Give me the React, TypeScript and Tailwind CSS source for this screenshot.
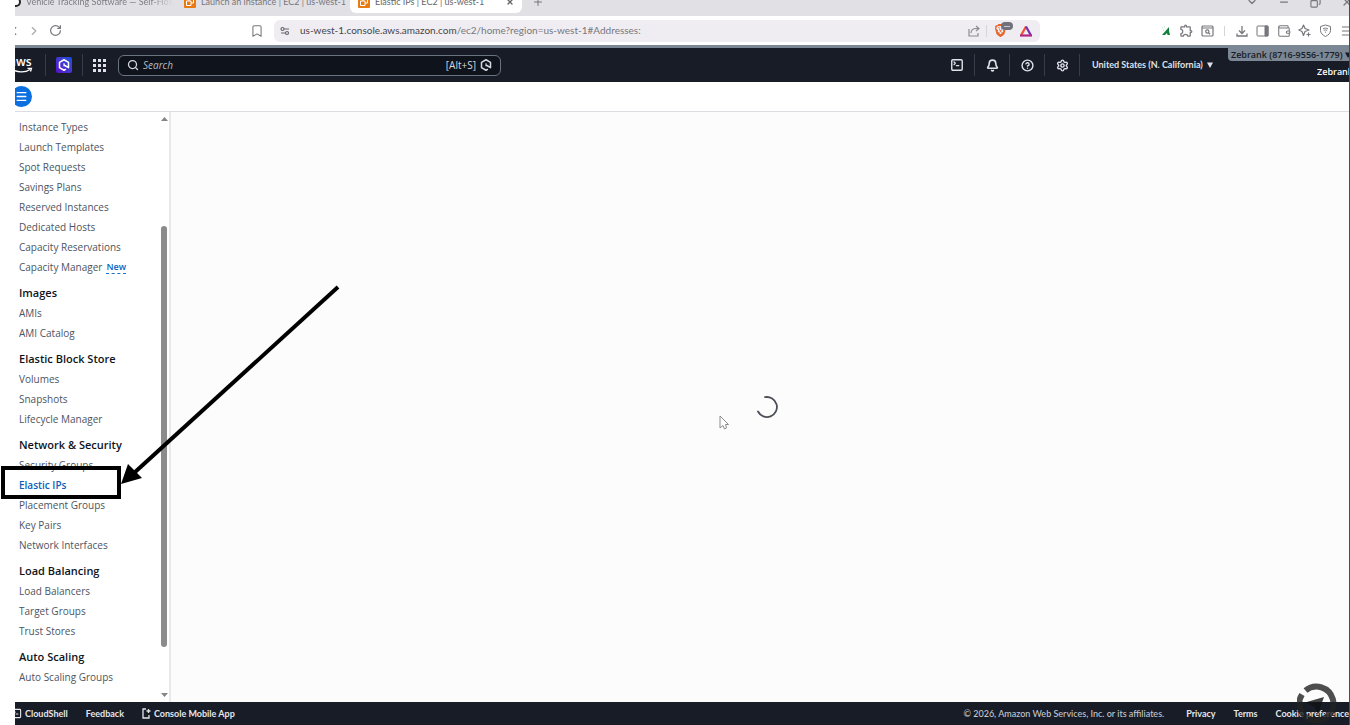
import React from 'react';
import {
  Bell,
  Bookmark,
  ChevronDown,
  ChevronLeft,
  ChevronRight,
  CircleHelp,
  Copy,
  Menu,
  Minus,
  Plus,
  RotateCw,
  Search,
  Settings,
  SquareTerminal,
  Wallet,
  X,
} from 'lucide-react';
import { MdOutlineExtension } from 'react-icons/md';
import { SiBrave } from 'react-icons/si';

const sections = [
  {
    title: '',
    items: [
      'Instance Types',
      'Launch Templates',
      'Spot Requests',
      'Savings Plans',
      'Reserved Instances',
      'Dedicated Hosts',
      'Capacity Reservations',
      'Capacity Manager',
    ],
  },
  { title: 'Images', items: ['AMIs', 'AMI Catalog'] },
  { title: 'Elastic Block Store', items: ['Volumes', 'Snapshots', 'Lifecycle Manager'] },
  {
    title: 'Network & Security',
    items: ['Security Groups', 'Elastic IPs', 'Placement Groups', 'Key Pairs', 'Network Interfaces'],
  },
  { title: 'Load Balancing', items: ['Load Balancers', 'Target Groups', 'Trust Stores'] },
  { title: 'Auto Scaling', items: ['Auto Scaling Groups'] },
];

const HexIcon = () => (
  <svg width="12" height="12" viewBox="0 0 16 16" fill="none" stroke="currentColor" strokeWidth="2">
    <path d="M10.500 13.500 8 15 2 11.500v-7L8 1l6 3.500v7L8 8" strokeLinejoin="round" />
    <path d="M8 5.500v4" strokeWidth="1.500" />
  </svg>
);

const Caret = () => (
  <svg className="shrink-0" width="6" height="6" viewBox="0 0 6 6">
    <path d="M0 .5h6L3 6z" fill="currentColor" />
  </svg>
);

const Ec2Icon = () => (
  <svg className="shrink-0" width="12" height="12" viewBox="0 0 12 12">
    <rect width="12" height="12" rx="1" fill="#e87a12" />
    <path d="M2.500 5h4.500v4.500H2.500zM5 5V2.500h4.500V7H7" fill="none" stroke="#fff" />
  </svg>
);

const BrowserTabs = () => (
  <div className="flex h-4 flex-col justify-end overflow-hidden bg-[#e1e0e5] pb-[3px] font-['Lato',sans-serif] text-[9px] text-[#77777d]">
    <div className="flex h-[22px] shrink-0 items-center">
      <div className="flex w-[161px] items-center gap-[5px] overflow-hidden whitespace-nowrap">
        <svg className="-ml-1 shrink-0" width="10" height="10" viewBox="0 0 10 10">
          <circle cx="5" cy="5" r="4" fill="#fff" stroke="#26262b" strokeWidth="2" />
        </svg>
        <span className="bg-linear-to-r from-[#77777d] from-85% to-transparent bg-clip-text text-transparent">
          Vehicle Tracking Software — Self-Hos
        </span>
      </div>
      <div className="flex w-[174px] items-center gap-[5px] whitespace-nowrap pl-2">
        <Ec2Icon />
        <span>Launch an instance | EC2 | us-west-1</span>
      </div>
      <div className="flex h-full w-[172px] items-center gap-[5px] whitespace-nowrap rounded-b-md bg-white px-2 text-[#66666b]">
        <Ec2Icon />
        <span className="flex-1">Elastic IPs | EC2 | us-west-1</span>
        <button aria-label="Close tab"><X size={8} strokeWidth={4} /></button>
      </div>
      <button className="ml-2.5" aria-label="New tab"><Plus size={12} /></button>
      <div className="-mr-1 ml-auto flex items-center gap-5">
        <ChevronDown size={12} strokeWidth={2.5} />
        <Minus size={12} strokeWidth={2.5} />
        <Copy size={11} strokeWidth={2.5} className="-scale-x-100" />
        <X size={12} strokeWidth={2.5} />
      </div>
    </div>
  </div>
);

const toolIcons = [
  <svg key="leaf" width="10" height="10" viewBox="0 0 10 10">
    <path d="M1 9 8 1v4l1 4H6.500L6 7 4 9z" fill="#12803c" />
    <path d="M1 2h1M3 1h1M2 4h1" stroke="#b5dcb9" />
  </svg>,
  <MdOutlineExtension key="extension" size={15} />,
  <svg key="tab-search" width="13" height="12" viewBox="0 0 13 12" fill="none" stroke="currentColor" strokeWidth="1.200">
    <rect x="1" y="1" width="11" height="10" rx="1" />
    <path d="M1 3h11M7.500 7.800 9 9.200" />
    <circle cx="6.300" cy="6.500" r="1.600" />
  </svg>,
  <span key="sep" className="h-2.5 w-px bg-[#d5d5d9]" />,
  <svg key="download" width="12" height="12" viewBox="0 0 12 12" fill="none" stroke="currentColor" strokeWidth="1.300">
    <path d="M6 1v7M3 5.500l3 3 3-3M1 8.500V11h10V8.500" />
  </svg>,
  <svg key="panel" width="13" height="12" viewBox="0 0 13 12" fill="none" stroke="currentColor">
    <rect x="1" y="1" width="11" height="10" rx="1" />
    <path d="M9 1h3v10H9z" fill="currentColor" />
  </svg>,
  <Wallet key="wallet" size={14} strokeWidth={1.8} />,
  <svg key="sparkle" width="13" height="13" viewBox="0 0 13 13" fill="none" stroke="currentColor" strokeWidth="1.200">
    <path d="M5.500 1 7 4.500l4 1.500-4 1.500-1.500 4L4 7.500.8 6 4 4.500z" strokeLinejoin="round" />
    <path d="M10.500 8.500v4M8.500 10.500h4" />
  </svg>,
  <svg key="vpn" width="13" height="13" viewBox="0 0 13 13" fill="none" stroke="currentColor">
    <path d="M6.500 1 11.500 2.500v4c0 2.500-2 4.500-5 6-3-1.500-5-3.500-5-6v-4z" />
    <path d="M4 5c1.500-1.200 3.500-1.200 5 0M4.800 6.600c1-.8 2.400-.8 3.400 0M6 8.200h1" />
  </svg>,
  <Menu key="menu" size={14} strokeWidth={1.8} />,
];

const AddressBar = () => (
  <div className="flex h-[29px] items-center overflow-hidden bg-white text-[#77777c]">
    <ChevronLeft size={14} className="-ml-2 shrink-0" />
    <ChevronRight size={14} className="ml-1.5 shrink-0 text-[#aaaaae]" />
    <RotateCw size={13} strokeWidth={2.2} className="ml-2 shrink-0" />
    <Bookmark size={14} strokeWidth={1.8} className="ml-[188px] shrink-0" />
    <div className="ml-2.5 flex h-[22px] flex-1 items-center rounded-md bg-[#efedf2] px-1.5">
      <svg width="10" height="10" viewBox="0 0 10 10" fill="none" stroke="#66666b" strokeWidth="1.200">
        <circle cx="2.500" cy="3" r="1.500" />
        <path d="M4 3h5M1 7h4" />
        <circle cx="7" cy="7" r="1.500" />
      </svg>
      <span className="ml-2.5 flex-1 whitespace-nowrap font-['Lato',sans-serif] text-[10px] text-[#77777c]">
        <span className="text-[#45454a]">us-west-1.console.aws.amazon.com</span>/ec2/home?region=us-west-1#Addresses:
      </span>
      <svg width="12" height="12" viewBox="0 0 12 12" fill="none" stroke="#8b8b90" strokeWidth="1.200">
        <path d="M1 4v7h9V8M3 8c0-3 2-4.500 5-4.500h3M8 1l3 2.500L8 6" />
      </svg>
      <span className="ml-1.5 h-3 w-px bg-[#d5d5d9]" />
      <span className="relative ml-[7px] mr-3 flex">
        <SiBrave size={13} color="#e8642a" />
        <span className="absolute -top-0.5 left-[7px] flex h-2 w-3 items-center justify-center rounded-full bg-[#70717b]">
          <span className="h-px w-1.5 bg-[#c9c9cf]" />
        </span>
      </span>
      <svg className="mr-px" width="14" height="12" viewBox="0 0 14 12" fill="none" strokeWidth="2.200">
        <path d="M7 1.500 2 10.500" stroke="#f0502c" />
        <path d="M7 1.500l5 9" stroke="#7a2bb0" />
        <path d="M1 10.500h12" stroke="#b32585" />
      </svg>
    </div>
    <div className="-mr-2 ml-[115px] flex">
      {toolIcons.map((icon, i) => (
        <span key={i} className={`flex items-center justify-center ${i === 3 ? 'w-[13px]' : 'w-[21px]'}`}>
          {icon}
        </span>
      ))}
    </div>
  </div>
);

const Divider = () => <span className="h-[22px] w-px shrink-0 bg-[#363d49]" />;

const ConsoleHeader = () => (
  <header className="flex h-[37px] items-center overflow-hidden border-t-[3px] border-[#7b8794] bg-[#171c27] text-white">
    <div className="-ml-1.5 flex w-9 shrink-0 flex-col items-start">
      <span className="text-[12px] font-semibold leading-[10px]">aws</span>
      <svg width="24" height="6" viewBox="0 0 24 6" fill="none" stroke="#fff" strokeWidth="1.300">
        <path d="M1 1c7 5 15 5 20 1.500M18.500 1.300H22.500L21.500 4.500" />
      </svg>
    </div>
    <Divider />
    <button className="mx-2.5 flex size-4 shrink-0 items-center justify-center rounded-xs bg-linear-to-tr from-[#5a05c8] to-[#0b50d8]" aria-label="Amazon Q">
      <HexIcon />
    </button>
    <Divider />
    <button className="ml-2.5 grid grid-cols-3 gap-[2px]" aria-label="Services">
      {Array.from({ length: 9 }, (_, i) => (
        <span key={i} className="size-[3px] bg-[#dfe2e8]" />
      ))}
    </button>
    <div className="ml-3 flex h-[21px] w-[383px] items-center rounded-md border border-[#6a7380] bg-[#0f131b] px-2 text-[#d5d9e0]">
      <Search size={12} strokeWidth={2.5} />
      <input
        aria-label="Search"
        placeholder="Search"
        className="ml-1 min-w-0 flex-1 text-[10px] italic outline-none placeholder:text-[#b5bac3]"
      />
      <span className="mr-1 text-[10px]">[Alt+S]</span>
      <HexIcon />
    </div>
    <div className="ml-auto flex items-center text-[#dfe2e8]">
      <button className="flex w-[34px] justify-center" aria-label="CloudShell"><SquareTerminal size={14} strokeWidth={2.4} /></button>
      <Divider />
      <button className="flex w-[34px] justify-center" aria-label="Notifications"><Bell size={13} strokeWidth={3} /></button>
      <Divider />
      <button className="flex w-[34px] justify-center" aria-label="Help"><CircleHelp size={13} strokeWidth={2.6} /></button>
      <Divider />
      <button className="flex w-[34px] justify-center" aria-label="Settings"><Settings size={13} strokeWidth={2.6} /></button>
      <Divider />
      <button className="flex w-[148px] items-center gap-1 whitespace-nowrap pl-3 font-['Lato',sans-serif] text-[9px] font-bold">
        United States (N. California)
        <Caret />
      </button>
    </div>
    <div className="flex w-[121px] flex-col self-stretch whitespace-nowrap text-[9px] font-semibold">
      <button className="flex h-[13px] items-center gap-[2px] rounded-bl-sm bg-[#7b8794] pl-[3px] text-[#171c27]">
        Zebrank (8716-9556-1779)
        <Caret />
      </button>
      <span className="-mr-1 mt-1 self-end">Zebrank</span>
    </div>
  </header>
);

const Sidebar = () => (
  <aside className="flex w-[156px] shrink-0 border-r-2 border-[#e8e9eb] bg-white">
    <nav className="flex-1 overflow-hidden whitespace-nowrap pl-1 pt-[5px]">
      {sections.map((section) => (
        <div key={section.title} className="mb-1.5">
          {section.title && <h3 className="text-[11px] font-semibold leading-5 text-[#0f141c]">{section.title}</h3>}
          <ul>
            {section.items.map((item) => (
              <li key={item} className="flex h-5 items-center">
                <a
                  href="#"
                  className={item === 'Elastic IPs' ? 'text-[10px] font-semibold text-[#0a5fb8]' : 'text-[10px] text-[#4c545f]'}
                >
                  {item}
                </a>
                {item === 'Capacity Manager' && (
                  <a href="#" className="ml-1 border-b border-dashed border-[#1a73cf] text-[9px] font-semibold leading-3 text-[#0a62c0]">
                    New
                  </a>
                )}
              </li>
            ))}
          </ul>
        </div>
      ))}
    </nav>
    <div className="flex w-2.5 flex-col items-center py-[5px]">
      <svg width="7" height="4" viewBox="0 0 7 4"><path d="M3.500 0 7 4H0z" fill="#858585" /></svg>
      <span className="mb-[46px] mt-[105px] w-1.5 flex-1 rounded-full bg-[#8b8b8b]" />
      <svg width="7" height="4" viewBox="0 0 7 4"><path d="M3.500 4 7 0H0z" fill="#858585" /></svg>
    </div>
  </aside>
);

const Footer = () => (
  <footer className="flex h-[23px] items-center overflow-hidden whitespace-nowrap bg-[#171c27] font-['Lato',sans-serif] text-[9px] font-bold text-[#e4e6ea]">
    <button className="-ml-1 flex items-center gap-[3px]">
      <SquareTerminal size={11} strokeWidth={2.4} />
      CloudShell
    </button>
    <button className="ml-[18px]">Feedback</button>
    <button className="ml-[18px] flex items-center gap-[3px]">
      <svg width="9" height="11" viewBox="0 0 9 11" fill="none" stroke="currentColor" strokeWidth="1.300">
        <path d="M4 1H1v9h6V7M6.500 1v4M4.500 3h4" />
      </svg>
      Console Mobile App
    </button>
    <span className="ml-auto font-medium text-[#c3c7ce]">© 2026, Amazon Web Services, Inc. or its affiliates.</span>
    <a href="#" className="ml-[22px]">Privacy</a>
    <a href="#" className="ml-[18px]">Terms</a>
    <a href="#" className="-mr-1 ml-[18px]">Cookie preferences</a>
  </footer>
);

const App: React.FC = () => {
  return (
    <div className="relative h-screen overflow-hidden bg-white pl-[15px] font-['Open_Sans',sans-serif]">
      <div className="flex h-full flex-col border-r border-[#4a4d52]">
        <BrowserTabs />
        <AddressBar />
        <ConsoleHeader />
        <div className="flex h-[30px] items-center overflow-hidden border-b border-[#dcdde0] bg-white">
          <button className="-ml-1 flex size-[21px] items-center justify-center rounded-full bg-[#0b6fe0] text-white" aria-label="Open navigation">
            <Menu size={13} strokeWidth={2.4} />
          </button>
        </div>
        <div className="flex min-h-0 flex-1">
          <Sidebar />
          <main className="flex flex-1 items-center justify-center bg-[#fcfcfc]">
            <svg className="ml-3.5" width="24" height="24" viewBox="0 0 24 24" fill="none" stroke="#4b4f55" strokeWidth="1.800">
              <path d="M10 2.200A10 10 0 1 1 3 16.500" strokeLinecap="round" />
            </svg>
          </main>
        </div>
        <Footer />
      </div>

      {/* pointer */}
      <svg className="absolute left-[719px] top-[415px]" width="11" height="16" viewBox="0 0 11 16">
        <path d="M1 1v12l3-2.500 1.500 3.500 2-1L6.500 9.500H9.500z" fill="#fff" stroke="#8c8c8c" />
      </svg>

      {/* highlight box and arrow */}
      <div className="absolute left-px top-[466px] h-[33px] w-[120px] border-4 border-black" />
      <svg className="absolute left-[120px] top-[284px]" width="222" height="204" viewBox="0 0 222 204">
        <path d="M218 3 14 189" stroke="#000" strokeWidth="4" />
        <path d="M1 200 8 180 22 194z" fill="#000" />
      </svg>

      {/* recorder badge */}
      <svg className="absolute bottom-0 right-[13px]" width="40" height="42" viewBox="0 0 40 42">
        <path d="M8.500 7.500A17 17 0 1 1 5 11.500" fill="none" stroke="#222" strokeWidth="6" opacity=".8" />
        <path d="M8 19.500 27 14 21 31 17.500 23.500z" fill="#101114" opacity=".8" />
      </svg>
    </div>
  );
};

export default App;
